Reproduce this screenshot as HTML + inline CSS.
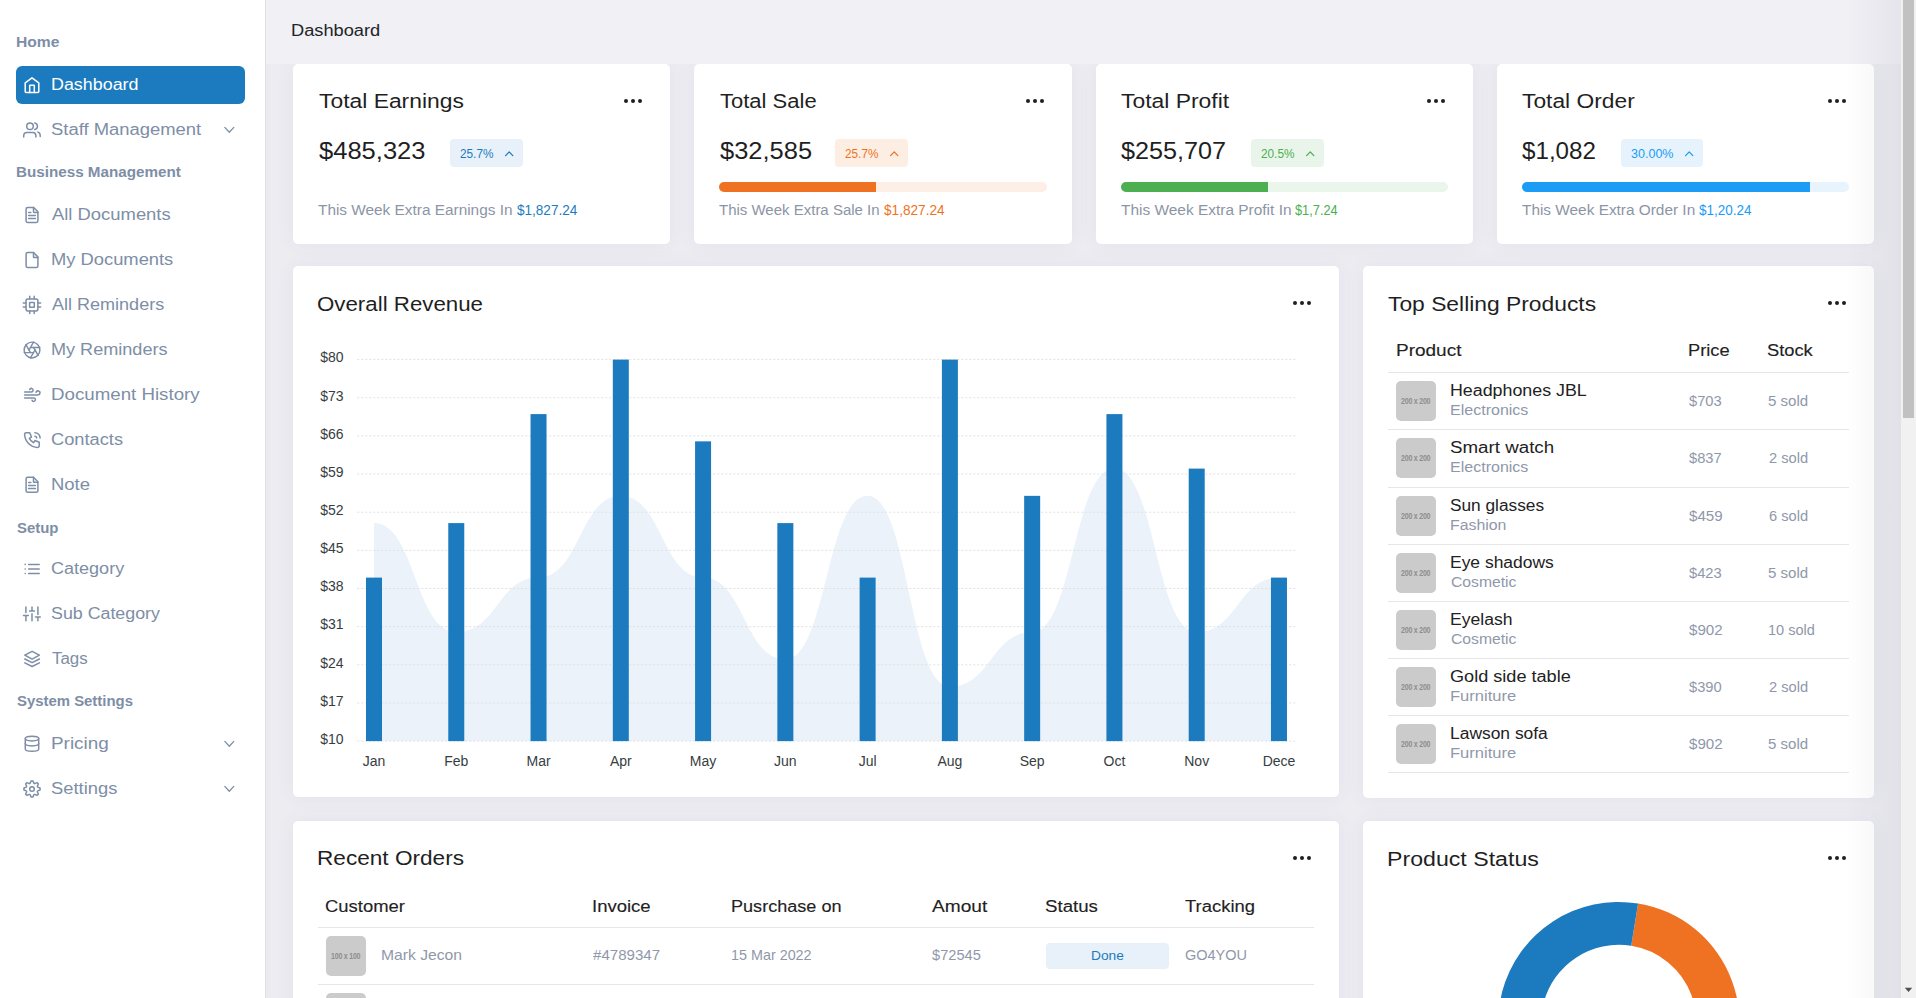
<!DOCTYPE html>
<html><head><meta charset="utf-8"><title>Dashboard</title><style>
*{margin:0;padding:0;box-sizing:border-box}
html,body{width:1916px;height:998px;overflow:hidden;background:#ececf1;font-family:"Liberation Sans",sans-serif}
.t{position:absolute;white-space:nowrap;line-height:1}
.ov{position:absolute;left:0;top:0;overflow:visible}
.sidebar{position:absolute;left:0;top:0;width:266px;height:998px;background:#fff;border-right:1px solid #e0e0e4;box-shadow:0 0 8px rgba(60,60,100,0.03)}
.active{position:absolute;left:16px;top:66px;width:229px;height:38px;background:#1c7bbf;border-radius:6px}
.card{position:absolute;background:#fff;border-radius:5px;box-shadow:0 0 20px rgba(90,90,130,0.06)}
.badge{position:absolute;top:139px;height:28px;border-radius:4px}
.track{position:absolute;top:182px;width:327.5px;height:9.5px;border-radius:5px;overflow:hidden}
.dot{position:absolute;width:4.2px;height:4.2px;border-radius:50%;background:#1f1f1f}
.hl{position:absolute;height:1px;background:#e6e6e6}
.ph{position:absolute;width:40px;height:40px;background:#cbcbcb;border-radius:5px;display:flex;align-items:center;justify-content:center}
.ph span{font-family:"Liberation Sans",sans-serif;font-weight:700;font-size:9px;color:#8e8e8e;letter-spacing:-0.3px;white-space:nowrap;transform:scaleX(0.78)}
.sb{position:absolute;left:1901px;top:0;width:15px;height:998px;background:#f1f1f1}
.thumb{position:absolute;left:1903px;top:0;width:11px;height:418px;background:#c1c1c1}
</style></head>
<body>
<div class="sidebar"></div>
<div class="active"></div>
<div class="card" style="left:293px;top:64px;width:377.25px;height:180px"></div><div class="card" style="left:694.25px;top:64px;width:377.25px;height:180px"></div><div class="card" style="left:1095.5px;top:64px;width:377.25px;height:180px"></div><div class="card" style="left:1496.75px;top:64px;width:377.25px;height:180px"></div><div class="card" style="left:293px;top:266px;width:1046px;height:531px"></div><div class="card" style="left:1363px;top:266px;width:511px;height:532px"></div><div class="card" style="left:293px;top:821px;width:1046px;height:400px"></div><div class="card" style="left:1363px;top:821px;width:511px;height:400px"></div>
<div style="position:absolute;left:266px;top:0;width:1635px;height:64px;background:#f0f0f5"></div>
<div class="badge" style="left:450px;width:73px;background:#e8f1f9"></div><svg class="ov" style="left:503.70px;top:149px" width="11" height="9" viewBox="0 0 11 9"><path d="M1.6 6.6 L5.2 2.9 L8.8 6.6" fill="none" stroke="#1c7bbf" stroke-width="1.3" stroke-linecap="round" stroke-linejoin="round"/></svg><div class="dot" style="left:624.25px;top:99.00px"></div><div class="dot" style="left:631.25px;top:99.00px"></div><div class="dot" style="left:638.25px;top:99.00px"></div><div class="badge" style="left:835px;width:73px;background:#fdeee4"></div><svg class="ov" style="left:888.70px;top:149px" width="11" height="9" viewBox="0 0 11 9"><path d="M1.6 6.6 L5.2 2.9 L8.8 6.6" fill="none" stroke="#ef7222" stroke-width="1.3" stroke-linecap="round" stroke-linejoin="round"/></svg><div class="track" style="left:719.35px;background:#fdefe6"><div style="width:47.8%;height:100%;background:#ee7222"></div></div><div class="dot" style="left:1025.50px;top:99.00px"></div><div class="dot" style="left:1032.50px;top:99.00px"></div><div class="dot" style="left:1039.50px;top:99.00px"></div><div class="badge" style="left:1251px;width:73px;background:#e9f5ea"></div><svg class="ov" style="left:1304.70px;top:149px" width="11" height="9" viewBox="0 0 11 9"><path d="M1.6 6.6 L5.2 2.9 L8.8 6.6" fill="none" stroke="#4caf50" stroke-width="1.3" stroke-linecap="round" stroke-linejoin="round"/></svg><div class="track" style="left:1120.60px;background:#eaf5eb"><div style="width:44.9%;height:100%;background:#4caf50"></div></div><div class="dot" style="left:1426.75px;top:99.00px"></div><div class="dot" style="left:1433.75px;top:99.00px"></div><div class="dot" style="left:1440.75px;top:99.00px"></div><div class="badge" style="left:1621px;width:82px;background:#e6f3fd"></div><svg class="ov" style="left:1683.70px;top:149px" width="11" height="9" viewBox="0 0 11 9"><path d="M1.6 6.6 L5.2 2.9 L8.8 6.6" fill="none" stroke="#1a9cf5" stroke-width="1.3" stroke-linecap="round" stroke-linejoin="round"/></svg><div class="track" style="left:1521.85px;background:#e7f4fe"><div style="width:88.0%;height:100%;background:#1b9df6"></div></div><div class="dot" style="left:1828.00px;top:99.00px"></div><div class="dot" style="left:1835.00px;top:99.00px"></div><div class="dot" style="left:1842.00px;top:99.00px"></div><div class="dot" style="left:1293.00px;top:300.80px"></div><div class="dot" style="left:1300.00px;top:300.80px"></div><div class="dot" style="left:1307.00px;top:300.80px"></div><div class="dot" style="left:1828.00px;top:300.80px"></div><div class="dot" style="left:1835.00px;top:300.80px"></div><div class="dot" style="left:1842.00px;top:300.80px"></div><div class="dot" style="left:1293.00px;top:855.80px"></div><div class="dot" style="left:1300.00px;top:855.80px"></div><div class="dot" style="left:1307.00px;top:855.80px"></div><div class="dot" style="left:1828.00px;top:855.60px"></div><div class="dot" style="left:1835.00px;top:855.60px"></div><div class="dot" style="left:1842.00px;top:855.60px"></div>
<div class="hl" style="left:1388px;top:372px;width:461px"></div><div class="hl" style="left:1388px;top:429px;width:461px"></div><div class="hl" style="left:1388px;top:487px;width:461px"></div><div class="hl" style="left:1388px;top:544px;width:461px"></div><div class="hl" style="left:1388px;top:601px;width:461px"></div><div class="hl" style="left:1388px;top:658px;width:461px"></div><div class="hl" style="left:1388px;top:715px;width:461px"></div><div class="hl" style="left:1388px;top:772px;width:461px"></div><div class="hl" style="left:318px;top:927px;width:996px"></div><div class="hl" style="left:318px;top:984.3px;width:996px"></div><div style="position:absolute;left:1046px;top:943px;width:123px;height:26px;background:#e8f1f9;border-radius:4px"></div>
<div class="ph" style="left:1396px;top:381.10px"><span>200 x 200</span></div><div class="ph" style="left:1396px;top:438.00px"><span>200 x 200</span></div><div class="ph" style="left:1396px;top:496.20px"><span>200 x 200</span></div><div class="ph" style="left:1396px;top:553.10px"><span>200 x 200</span></div><div class="ph" style="left:1396px;top:610.20px"><span>200 x 200</span></div><div class="ph" style="left:1396px;top:667.10px"><span>200 x 200</span></div><div class="ph" style="left:1396px;top:724.10px"><span>200 x 200</span></div><div class="ph" style="left:326px;top:936.4px"><span>100 x 100</span></div><div class="ph" style="left:326px;top:993px"><span>100 x 100</span></div>
<svg class="ov" width="1916" height="998" viewBox="0 0 1916 998"><path d="M374.00 523.10 C415.13 523.10 415.13 632.10 456.27 632.10 C497.40 632.10 497.40 577.60 538.54 577.60 C579.67 577.60 579.67 495.85 620.81 495.85 C661.94 495.85 661.94 577.60 703.08 577.60 C744.21 577.60 744.21 659.35 785.35 659.35 C826.48 659.35 826.48 495.85 867.62 495.85 C908.75 495.85 908.75 686.60 949.89 686.60 C991.02 686.60 991.02 632.10 1032.16 632.10 C1073.29 632.10 1073.29 468.60 1114.43 468.60 C1155.56 468.60 1155.56 632.10 1196.70 632.10 C1237.83 632.10 1237.83 577.60 1278.97 577.60 L1278.97 741.10 L374.00 741.10 Z" fill="#ebf2fa"/><line x1="357.3" y1="359.60" x2="1295.6" y2="359.60" stroke="#e0e0e0" stroke-width="1" stroke-dasharray="2 2"/><line x1="357.3" y1="397.75" x2="1295.6" y2="397.75" stroke="#e0e0e0" stroke-width="1" stroke-dasharray="2 2"/><line x1="357.3" y1="435.90" x2="1295.6" y2="435.90" stroke="#e0e0e0" stroke-width="1" stroke-dasharray="2 2"/><line x1="357.3" y1="474.05" x2="1295.6" y2="474.05" stroke="#e0e0e0" stroke-width="1" stroke-dasharray="2 2"/><line x1="357.3" y1="512.20" x2="1295.6" y2="512.20" stroke="#e0e0e0" stroke-width="1" stroke-dasharray="2 2"/><line x1="357.3" y1="550.35" x2="1295.6" y2="550.35" stroke="#e0e0e0" stroke-width="1" stroke-dasharray="2 2"/><line x1="357.3" y1="588.50" x2="1295.6" y2="588.50" stroke="#e0e0e0" stroke-width="1" stroke-dasharray="2 2"/><line x1="357.3" y1="626.65" x2="1295.6" y2="626.65" stroke="#e0e0e0" stroke-width="1" stroke-dasharray="2 2"/><line x1="357.3" y1="664.80" x2="1295.6" y2="664.80" stroke="#e0e0e0" stroke-width="1" stroke-dasharray="2 2"/><line x1="357.3" y1="702.95" x2="1295.6" y2="702.95" stroke="#e0e0e0" stroke-width="1" stroke-dasharray="2 2"/><line x1="357.3" y1="741.10" x2="1295.6" y2="741.10" stroke="#e0e0e0" stroke-width="1" stroke-dasharray="2 2"/><rect x="366.00" y="577.60" width="16" height="163.50" fill="#1c7bbf"/><rect x="448.27" y="523.10" width="16" height="218.00" fill="#1c7bbf"/><rect x="530.54" y="414.10" width="16" height="327.00" fill="#1c7bbf"/><rect x="612.81" y="359.60" width="16" height="381.50" fill="#1c7bbf"/><rect x="695.08" y="441.35" width="16" height="299.75" fill="#1c7bbf"/><rect x="777.35" y="523.10" width="16" height="218.00" fill="#1c7bbf"/><rect x="859.62" y="577.60" width="16" height="163.50" fill="#1c7bbf"/><rect x="941.89" y="359.60" width="16" height="381.50" fill="#1c7bbf"/><rect x="1024.16" y="495.85" width="16" height="245.25" fill="#1c7bbf"/><rect x="1106.43" y="414.10" width="16" height="327.00" fill="#1c7bbf"/><rect x="1188.70" y="468.60" width="16" height="272.50" fill="#1c7bbf"/><rect x="1270.97" y="577.60" width="16" height="163.50" fill="#1c7bbf"/><text x="343.5" y="362.40" text-anchor="end" font-family="Liberation Sans" font-size="14" fill="#373d3f">$80</text><text x="343.5" y="400.55" text-anchor="end" font-family="Liberation Sans" font-size="14" fill="#373d3f">$73</text><text x="343.5" y="438.70" text-anchor="end" font-family="Liberation Sans" font-size="14" fill="#373d3f">$66</text><text x="343.5" y="476.85" text-anchor="end" font-family="Liberation Sans" font-size="14" fill="#373d3f">$59</text><text x="343.5" y="515.00" text-anchor="end" font-family="Liberation Sans" font-size="14" fill="#373d3f">$52</text><text x="343.5" y="553.15" text-anchor="end" font-family="Liberation Sans" font-size="14" fill="#373d3f">$45</text><text x="343.5" y="591.30" text-anchor="end" font-family="Liberation Sans" font-size="14" fill="#373d3f">$38</text><text x="343.5" y="629.45" text-anchor="end" font-family="Liberation Sans" font-size="14" fill="#373d3f">$31</text><text x="343.5" y="667.60" text-anchor="end" font-family="Liberation Sans" font-size="14" fill="#373d3f">$24</text><text x="343.5" y="705.75" text-anchor="end" font-family="Liberation Sans" font-size="14" fill="#373d3f">$17</text><text x="343.5" y="743.90" text-anchor="end" font-family="Liberation Sans" font-size="14" fill="#373d3f">$10</text><text x="374.00" y="766.2" text-anchor="middle" font-family="Liberation Sans" font-size="14" fill="#373d3f">Jan</text><text x="456.27" y="766.2" text-anchor="middle" font-family="Liberation Sans" font-size="14" fill="#373d3f">Feb</text><text x="538.54" y="766.2" text-anchor="middle" font-family="Liberation Sans" font-size="14" fill="#373d3f">Mar</text><text x="620.81" y="766.2" text-anchor="middle" font-family="Liberation Sans" font-size="14" fill="#373d3f">Apr</text><text x="703.08" y="766.2" text-anchor="middle" font-family="Liberation Sans" font-size="14" fill="#373d3f">May</text><text x="785.35" y="766.2" text-anchor="middle" font-family="Liberation Sans" font-size="14" fill="#373d3f">Jun</text><text x="867.62" y="766.2" text-anchor="middle" font-family="Liberation Sans" font-size="14" fill="#373d3f">Jul</text><text x="949.89" y="766.2" text-anchor="middle" font-family="Liberation Sans" font-size="14" fill="#373d3f">Aug</text><text x="1032.16" y="766.2" text-anchor="middle" font-family="Liberation Sans" font-size="14" fill="#373d3f">Sep</text><text x="1114.43" y="766.2" text-anchor="middle" font-family="Liberation Sans" font-size="14" fill="#373d3f">Oct</text><text x="1196.70" y="766.2" text-anchor="middle" font-family="Liberation Sans" font-size="14" fill="#373d3f">Nov</text><text x="1278.97" y="766.2" text-anchor="middle" font-family="Liberation Sans" font-size="14" fill="#373d3f">Dece</text><path d="M1638.08 903.45 A120.6 120.6 0 0 1 1711.18 1100.02 L1678.32 1072.44 A77.7 77.7 0 0 0 1631.22 945.80 Z" fill="#ef7222"/><path d="M1711.18 1100.02 A120.6 120.6 0 0 1 1577.55 1135.83 L1592.23 1095.51 A77.7 77.7 0 0 0 1678.32 1072.44 Z" fill="#4caf50"/><path d="M1577.55 1135.83 A120.6 120.6 0 0 1 1638.08 903.45 L1631.22 945.80 A77.7 77.7 0 0 0 1592.23 1095.51 Z" fill="#1c7bbf"/></svg>
<svg class="ov" width="266" height="998" viewBox="0 0 266 998" fill="none" stroke-linecap="round" stroke-linejoin="round"><path d="M25.2 82.9 L32 77.8 L38.8 82.9 V91.6 a0.9 0.9 0 0 1 -0.9 0.9 H26.1 a0.9 0.9 0 0 1 -0.9 -0.9 Z" stroke="#ffffff" stroke-width="1.5"/><path d="M29.7 92.4 V85.6 a0.3 0.3 0 0 1 0.3 -0.3 h4 a0.3 0.3 0 0 1 0.3 0.3 V92.4" stroke="#ffffff" stroke-width="1.5"/><g stroke="#7d8ea6" stroke-width="1.5"><circle cx="30" cy="126.2" r="3.3"/><path d="M23.7 136.9 v-1.3 a3.2 3.2 0 0 1 3.2 -3.2 h5.8 a3.2 3.2 0 0 1 3.2 3.2 v1.3"/><path d="M34.7 122.9 a3.3 3.3 0 0 1 0 6.5"/><path d="M40.2 136.6 v-1.2 a3.4 3.4 0 0 0 -2.3 -3.3"/></g><path d="M224.8 127.4 L229.3 132.2 L233.8 127.4" stroke="#7d8ea6" stroke-width="1.3"/><path d="M224.8 741.4 L229.3 746.2 L233.8 741.4" stroke="#7d8ea6" stroke-width="1.3"/><path d="M224.8 786.4 L229.3 791.2 L233.8 786.4" stroke="#7d8ea6" stroke-width="1.3"/><g stroke="#7d8ea6" stroke-width="1.5"><path d="M33.5 207.4 v4.4 a0.6 0.6 0 0 0 0.6 0.6 h3.8"/><path d="M36.3 222.4 h-8.6 a1.6 1.6 0 0 1 -1.6 -1.6 v-11.8 a1.6 1.6 0 0 1 1.6 -1.6 h5.8 l4.4 4.4 v9 a1.6 1.6 0 0 1 -1.6 1.6 z"/><path d="M28.6 212.6 h2.2 M28.6 215.6 h6.8 M28.6 218.6 h6.8"/></g><g stroke="#7d8ea6" stroke-width="1.5"><path d="M33.5 252.5 v4.4 a0.6 0.6 0 0 0 0.6 0.6 h3.8"/><path d="M36.3 267.5 h-8.6 a1.6 1.6 0 0 1 -1.6 -1.6 v-11.8 a1.6 1.6 0 0 1 1.6 -1.6 h5.8 l4.4 4.4 v9 a1.6 1.6 0 0 1 -1.6 1.6 z"/></g><g stroke="#7d8ea6" stroke-width="1.5"><path d="M33.5 477.3 v4.4 a0.6 0.6 0 0 0 0.6 0.6 h3.8"/><path d="M36.3 492.3 h-8.6 a1.6 1.6 0 0 1 -1.6 -1.6 v-11.8 a1.6 1.6 0 0 1 1.6 -1.6 h5.8 l4.4 4.4 v9 a1.6 1.6 0 0 1 -1.6 1.6 z"/><path d="M28.6 482.5 h2.2 M28.6 485.5 h6.8 M28.6 488.5 h6.8"/></g><g stroke="#7d8ea6" stroke-width="1.5"><rect x="26" y="299" width="11.9" height="11.9" rx="1.8"/><rect x="29.6" y="302.6" width="4.7" height="4.7" rx="0.3"/><path d="M23.3 302.9h2.7 M23.3 306.9h2.7 M37.9 302.9h2.7 M37.9 306.9h2.7 M29.7 296.3v2.7 M34.2 296.3v2.7 M29.7 310.9v2.7 M34.2 310.9v2.7"/></g><g stroke="#7d8ea6" stroke-width="1.45"><circle cx="32.0" cy="350.0" r="7.9"/><path d="M24.22 352.60 L33.50 352.60"/><path d="M25.86 344.57 L30.50 352.60"/><path d="M33.64 341.97 L29.00 350.00"/><path d="M39.78 347.40 L30.50 347.40"/><path d="M38.14 355.43 L33.50 347.40"/><path d="M30.36 358.03 L35.00 350.00"/></g><g stroke="#7d8ea6" stroke-width="1.5"><path d="M24.6 391.9 H31.3 a1.75 1.75 0 1 0 -1.65 -2.3"/><path d="M24.6 395 H37.9 a2.05 2.05 0 1 0 -1.9 -2.7"/><path d="M24.6 397.9 H33.7 a1.75 1.75 0 1 1 -1.65 2.3"/></g><g transform="translate(33.2 441.3) scale(1.08) translate(-32.4 -439.9)" stroke="#7d8ea6" stroke-width="1.4"><path d="M26 432 h3.2 l1.6 4 l-2 1.2 a8.8 8.8 0 0 0 4 4 l1.2 -2 l4 1.6 v3.2 a1.6 1.6 0 0 1 -1.6 1.6 a12.8 12.8 0 0 1 -12 -12 a1.6 1.6 0 0 1 1.6 -1.6"/><path d="M34 435.2 a1.6 1.6 0 0 1 1.6 1.6"/><path d="M34 432 a4.8 4.8 0 0 1 4.8 4.8"/></g><g stroke="#7d8ea6" stroke-width="1.5"><path d="M28.6 564.4 h10.6 M28.6 569 h10.6 M28.6 573.5 h10.6"/><path d="M25.2 564.4 v0.01 M25.2 569 v0.01 M25.2 573.5 v0.01" stroke-width="1.6"/></g><g stroke="#7d8ea6" stroke-width="1.5"><path d="M25.9 607 v5.4 M23.5 615.5 h4.8 M25.9 615.5 v5.2"/><path d="M32 607 v3.9 M29.6 610.9 h4.8 M32 613.8 v6.9"/><path d="M37.9 607 v7.4 M35.5 616.9 h4.8 M37.9 616.9 v3.8"/></g><g stroke="#7d8ea6" stroke-width="1.5"><path d="M32.1 651.3 l-7.3 3.9 l7.3 3.9 l7.3 -3.9 z"/><path d="M24.8 659 l7.3 3.7 l7.3 -3.7"/><path d="M24.8 662.8 l7.3 3.7 l7.3 -3.7"/></g><g stroke="#7d8ea6" stroke-width="1.5"><ellipse cx="32" cy="738.6" rx="6.7" ry="2.3"/><path d="M25.3 738.6 v5 a6.7 2.3 0 0 0 13.4 0 v-5"/><path d="M25.3 743.6 v5.3 a6.7 2.3 0 0 0 13.4 0 v-5.3"/></g><g stroke="#7d8ea6" stroke-width="1.5"><path d="M30.15 783.29 L31.01 780.96 A8.1 8.1 0 0 1 32.99 780.96 L33.85 783.29 A6.0 6.0 0 0 1 34.72 783.65 L36.99 782.62 A8.1 8.1 0 0 1 38.38 784.01 L37.35 786.28 A6.0 6.0 0 0 1 37.71 787.15 L40.04 788.01 A8.1 8.1 0 0 1 40.04 789.99 L37.71 790.85 A6.0 6.0 0 0 1 37.35 791.72 L38.38 793.99 A8.1 8.1 0 0 1 36.99 795.38 L34.72 794.35 A6.0 6.0 0 0 1 33.85 794.71 L32.99 797.04 A8.1 8.1 0 0 1 31.01 797.04 L30.15 794.71 A6.0 6.0 0 0 1 29.28 794.35 L27.01 795.38 A8.1 8.1 0 0 1 25.62 793.99 L26.65 791.72 A6.0 6.0 0 0 1 26.29 790.85 L23.96 789.99 A8.1 8.1 0 0 1 23.96 788.01 L26.29 787.15 A6.0 6.0 0 0 1 26.65 786.28 L25.62 784.01 A8.1 8.1 0 0 1 27.01 782.62 L29.28 783.65 A6.0 6.0 0 0 1 30.15 783.29 Z"/><circle cx="32.0" cy="789.0" r="2.3"/></g></svg>
<div class="t" style="left:15.88px;top:35.35px;font-size:14px;font-weight:700;color:#7d8ea6;letter-spacing:0.000px;transform:scaleX(1.1184);transform-origin:0 0;">Home</div>
<div class="t" style="left:15.91px;top:165.45px;font-size:14px;font-weight:700;color:#7d8ea6;letter-spacing:0.000px;transform:scaleX(1.0861);transform-origin:0 0;">Business Management</div>
<div class="t" style="left:16.50px;top:520.75px;font-size:14px;font-weight:700;color:#7d8ea6;letter-spacing:0.000px;transform:scaleX(1.0667);transform-origin:0 0;">Setup</div>
<div class="t" style="left:16.50px;top:694.45px;font-size:14px;font-weight:700;color:#7d8ea6;letter-spacing:0.000px;transform:scaleX(1.0642);transform-origin:0 0;">System Settings</div>
<div class="t" style="left:50.68px;top:76.66px;font-size:16px;font-weight:400;color:#ffffff;letter-spacing:0.000px;transform:scaleX(1.1182);transform-origin:0 0;">Dashboard</div>
<div class="t" style="left:50.65px;top:121.76px;font-size:16px;font-weight:400;color:#7d8ea6;letter-spacing:0.000px;transform:scaleX(1.1515);transform-origin:0 0;">Staff Management</div>
<div class="t" style="left:51.80px;top:206.66px;font-size:16px;font-weight:400;color:#7d8ea6;letter-spacing:0.000px;transform:scaleX(1.1505);transform-origin:0 0;">All Documents</div>
<div class="t" style="left:50.65px;top:251.76px;font-size:16px;font-weight:400;color:#7d8ea6;letter-spacing:0.000px;transform:scaleX(1.1462);transform-origin:0 0;">My Documents</div>
<div class="t" style="left:51.80px;top:296.76px;font-size:16px;font-weight:400;color:#7d8ea6;letter-spacing:0.000px;transform:scaleX(1.1263);transform-origin:0 0;">All Reminders</div>
<div class="t" style="left:50.67px;top:341.76px;font-size:16px;font-weight:400;color:#7d8ea6;letter-spacing:0.000px;transform:scaleX(1.1294);transform-origin:0 0;">My Reminders</div>
<div class="t" style="left:50.63px;top:386.76px;font-size:16px;font-weight:400;color:#7d8ea6;letter-spacing:0.000px;transform:scaleX(1.1690);transform-origin:0 0;">Document History</div>
<div class="t" style="left:50.66px;top:431.76px;font-size:16px;font-weight:400;color:#7d8ea6;letter-spacing:0.000px;transform:scaleX(1.1403);transform-origin:0 0;">Contacts</div>
<div class="t" style="left:50.65px;top:476.76px;font-size:16px;font-weight:400;color:#7d8ea6;letter-spacing:0.000px;transform:scaleX(1.1545);transform-origin:0 0;">Note</div>
<div class="t" style="left:50.67px;top:560.86px;font-size:16px;font-weight:400;color:#7d8ea6;letter-spacing:0.000px;transform:scaleX(1.1266);transform-origin:0 0;">Category</div>
<div class="t" style="left:50.69px;top:605.86px;font-size:16px;font-weight:400;color:#7d8ea6;letter-spacing:0.000px;transform:scaleX(1.1134);transform-origin:0 0;">Sub Category</div>
<div class="t" style="left:51.80px;top:650.86px;font-size:16px;font-weight:400;color:#7d8ea6;letter-spacing:0.000px;transform:scaleX(1.0559);transform-origin:0 0;">Tags</div>
<div class="t" style="left:50.62px;top:735.86px;font-size:16px;font-weight:400;color:#7d8ea6;letter-spacing:-0.000px;transform:scaleX(1.1809);transform-origin:0 0;">Pricing</div>
<div class="t" style="left:50.65px;top:780.86px;font-size:16px;font-weight:400;color:#7d8ea6;letter-spacing:0.000px;transform:scaleX(1.1474);transform-origin:0 0;">Settings</div>
<div class="t" style="left:290.86px;top:22.66px;font-size:16px;font-weight:400;color:#212529;letter-spacing:0.000px;transform:scaleX(1.1390);transform-origin:0 0;">Dashboard</div>
<div class="t" style="left:318.50px;top:91.17px;font-size:20px;font-weight:400;color:#1f1f1f;letter-spacing:0.000px;transform:scaleX(1.1429);transform-origin:0 0;">Total Earnings</div>
<div class="t" style="left:318.70px;top:139.18px;font-size:24px;font-weight:400;color:#1f1f1f;letter-spacing:-0.000px;transform:scaleX(1.0636);transform-origin:0 0;">$485,323</div>
<div class="t" style="left:460.00px;top:147.84px;font-size:12px;font-weight:400;color:#1c7bbf;letter-spacing:0.000px;transform:scaleX(0.9824);transform-origin:0 0;">25.7%</div>
<div class="t" style="left:318.20px;top:203.25px;font-size:14px;font-weight:400;color:#8c95a6;letter-spacing:0.000px;transform:scaleX(1.0977);transform-origin:0 0;">This Week Extra Earnings In</div>
<div class="t" style="left:516.70px;top:203.25px;font-size:14px;font-weight:400;color:#1c7bbf;letter-spacing:0.000px;transform:scaleX(0.9677);transform-origin:0 0;">$1,827.24</div>
<div class="t" style="left:719.75px;top:91.17px;font-size:20px;font-weight:400;color:#1f1f1f;letter-spacing:0.000px;transform:scaleX(1.1000);transform-origin:0 0;">Total Sale</div>
<div class="t" style="left:719.95px;top:139.18px;font-size:24px;font-weight:400;color:#1f1f1f;letter-spacing:-0.000px;transform:scaleX(1.0616);transform-origin:0 0;">$32,585</div>
<div class="t" style="left:845.00px;top:147.84px;font-size:12px;font-weight:400;color:#ef7222;letter-spacing:0.000px;transform:scaleX(0.9824);transform-origin:0 0;">25.7%</div>
<div class="t" style="left:719.45px;top:203.25px;font-size:14px;font-weight:400;color:#8c95a6;letter-spacing:0.000px;transform:scaleX(1.0710);transform-origin:0 0;">This Week Extra Sale In</div>
<div class="t" style="left:884.30px;top:203.25px;font-size:14px;font-weight:400;color:#ef7222;letter-spacing:0.000px;transform:scaleX(0.9726);transform-origin:0 0;">$1,827.24</div>
<div class="t" style="left:1121.00px;top:91.17px;font-size:20px;font-weight:400;color:#1f1f1f;letter-spacing:0.000px;transform:scaleX(1.1442);transform-origin:0 0;">Total Profit</div>
<div class="t" style="left:1121.20px;top:139.18px;font-size:24px;font-weight:400;color:#1f1f1f;letter-spacing:0.000px;transform:scaleX(1.0485);transform-origin:0 0;">$255,707</div>
<div class="t" style="left:1261.00px;top:147.84px;font-size:12px;font-weight:400;color:#4caf50;letter-spacing:0.000px;transform:scaleX(0.9824);transform-origin:0 0;">20.5%</div>
<div class="t" style="left:1120.70px;top:203.25px;font-size:14px;font-weight:400;color:#8c95a6;letter-spacing:0.000px;transform:scaleX(1.1032);transform-origin:0 0;">This Week Extra Profit In</div>
<div class="t" style="left:1294.80px;top:203.25px;font-size:14px;font-weight:400;color:#4caf50;letter-spacing:0.000px;transform:scaleX(0.9149);transform-origin:0 0;">$1,7.24</div>
<div class="t" style="left:1522.25px;top:91.17px;font-size:20px;font-weight:400;color:#1f1f1f;letter-spacing:0.000px;transform:scaleX(1.1394);transform-origin:0 0;">Total Order</div>
<div class="t" style="left:1522.45px;top:139.18px;font-size:24px;font-weight:400;color:#1f1f1f;letter-spacing:0.000px;transform:scaleX(1.0068);transform-origin:0 0;">$1,082</div>
<div class="t" style="left:1631.00px;top:147.84px;font-size:12px;font-weight:400;color:#1a9cf5;letter-spacing:-0.000px;transform:scaleX(1.0439);transform-origin:0 0;">30.00%</div>
<div class="t" style="left:1521.95px;top:203.25px;font-size:14px;font-weight:400;color:#8c95a6;letter-spacing:0.000px;transform:scaleX(1.0984);transform-origin:0 0;">This Week Extra Order In</div>
<div class="t" style="left:1698.60px;top:203.25px;font-size:14px;font-weight:400;color:#1a9cf5;letter-spacing:0.000px;transform:scaleX(0.9618);transform-origin:0 0;">$1,20.24</div>
<div class="t" style="left:317.19px;top:293.57px;font-size:20px;font-weight:400;color:#1f1f1f;letter-spacing:0.000px;transform:scaleX(1.1143);transform-origin:0 0;">Overall Revenue</div>
<div class="t" style="left:1388.30px;top:293.67px;font-size:20px;font-weight:400;color:#1f1f1f;letter-spacing:0.000px;transform:scaleX(1.1412);transform-origin:0 0;">Top Selling Products</div>
<div class="t" style="left:317.37px;top:848.37px;font-size:20px;font-weight:400;color:#1f1f1f;letter-spacing:0.000px;transform:scaleX(1.1302);transform-origin:0 0;">Recent Orders</div>
<div class="t" style="left:1387.34px;top:848.67px;font-size:20px;font-weight:400;color:#1f1f1f;letter-spacing:0.000px;transform:scaleX(1.1577);transform-origin:0 0;">Product Status</div>
<div class="t" style="left:1395.51px;top:343.36px;font-size:16px;font-weight:400;color:#222222;letter-spacing:0.000px;transform:scaleX(1.1870);transform-origin:0 0;-webkit-text-stroke:0.12px #222222;">Product</div>
<div class="t" style="left:1687.66px;top:343.36px;font-size:16px;font-weight:400;color:#222222;letter-spacing:0.000px;transform:scaleX(1.1429);transform-origin:0 0;-webkit-text-stroke:0.12px #222222;">Price</div>
<div class="t" style="left:1767.46px;top:343.36px;font-size:16px;font-weight:400;color:#222222;letter-spacing:0.000px;transform:scaleX(1.1436);transform-origin:0 0;-webkit-text-stroke:0.12px #222222;">Stock</div>
<div class="t" style="left:1450.19px;top:382.96px;font-size:16px;font-weight:400;color:#222222;letter-spacing:0.000px;transform:scaleX(1.1139);transform-origin:0 0;">Headphones JBL</div>
<div class="t" style="left:1450.16px;top:403.25px;font-size:14px;font-weight:400;color:#8f98aa;letter-spacing:0.000px;transform:scaleX(1.1448);transform-origin:0 0;">Electronics</div>
<div class="t" style="left:1688.80px;top:393.10px;font-size:15px;font-weight:400;color:#8f98aa;letter-spacing:0.000px;transform:scaleX(0.9788);transform-origin:0 0;">$703</div>
<div class="t" style="left:1767.80px;top:393.10px;font-size:15px;font-weight:400;color:#8f98aa;letter-spacing:0.000px;transform:scaleX(1.0026);transform-origin:0 0;">5 sold</div>
<div class="t" style="left:1450.13px;top:439.86px;font-size:16px;font-weight:400;color:#222222;letter-spacing:-0.000px;transform:scaleX(1.1713);transform-origin:0 0;">Smart watch</div>
<div class="t" style="left:1450.16px;top:460.15px;font-size:14px;font-weight:400;color:#8f98aa;letter-spacing:0.000px;transform:scaleX(1.1448);transform-origin:0 0;">Electronics</div>
<div class="t" style="left:1688.80px;top:450.00px;font-size:15px;font-weight:400;color:#8f98aa;letter-spacing:0.000px;transform:scaleX(0.9788);transform-origin:0 0;">$837</div>
<div class="t" style="left:1768.80px;top:450.00px;font-size:15px;font-weight:400;color:#8f98aa;letter-spacing:0.000px;transform:scaleX(0.9775);transform-origin:0 0;">2 sold</div>
<div class="t" style="left:1450.22px;top:498.06px;font-size:16px;font-weight:400;color:#222222;letter-spacing:0.000px;transform:scaleX(1.0791);transform-origin:0 0;">Sun glasses</div>
<div class="t" style="left:1450.17px;top:518.35px;font-size:14px;font-weight:400;color:#8f98aa;letter-spacing:0.000px;transform:scaleX(1.1333);transform-origin:0 0;">Fashion</div>
<div class="t" style="left:1688.80px;top:508.20px;font-size:15px;font-weight:400;color:#8f98aa;letter-spacing:0.000px;transform:scaleX(1.0091);transform-origin:0 0;">$459</div>
<div class="t" style="left:1768.80px;top:508.20px;font-size:15px;font-weight:400;color:#8f98aa;letter-spacing:0.000px;transform:scaleX(0.9775);transform-origin:0 0;">6 sold</div>
<div class="t" style="left:1450.21px;top:554.96px;font-size:16px;font-weight:400;color:#222222;letter-spacing:0.000px;transform:scaleX(1.0904);transform-origin:0 0;">Eye shadows</div>
<div class="t" style="left:1451.30px;top:575.25px;font-size:14px;font-weight:400;color:#8f98aa;letter-spacing:0.000px;transform:scaleX(1.1207);transform-origin:0 0;">Cosmetic</div>
<div class="t" style="left:1688.80px;top:565.10px;font-size:15px;font-weight:400;color:#8f98aa;letter-spacing:0.000px;transform:scaleX(0.9788);transform-origin:0 0;">$423</div>
<div class="t" style="left:1767.80px;top:565.10px;font-size:15px;font-weight:400;color:#8f98aa;letter-spacing:0.000px;transform:scaleX(1.0026);transform-origin:0 0;">5 sold</div>
<div class="t" style="left:1450.20px;top:612.06px;font-size:16px;font-weight:400;color:#222222;letter-spacing:0.000px;transform:scaleX(1.0964);transform-origin:0 0;">Eyelash</div>
<div class="t" style="left:1451.30px;top:632.35px;font-size:14px;font-weight:400;color:#8f98aa;letter-spacing:0.000px;transform:scaleX(1.1207);transform-origin:0 0;">Cosmetic</div>
<div class="t" style="left:1688.80px;top:622.20px;font-size:15px;font-weight:400;color:#8f98aa;letter-spacing:0.000px;transform:scaleX(1.0091);transform-origin:0 0;">$902</div>
<div class="t" style="left:1767.83px;top:622.20px;font-size:15px;font-weight:400;color:#8f98aa;letter-spacing:0.000px;transform:scaleX(0.9702);transform-origin:0 0;">10 sold</div>
<div class="t" style="left:1450.17px;top:668.96px;font-size:16px;font-weight:400;color:#222222;letter-spacing:0.000px;transform:scaleX(1.1314);transform-origin:0 0;">Gold side table</div>
<div class="t" style="left:1450.12px;top:689.25px;font-size:14px;font-weight:400;color:#8f98aa;letter-spacing:0.000px;transform:scaleX(1.1818);transform-origin:0 0;">Furniture</div>
<div class="t" style="left:1688.80px;top:679.10px;font-size:15px;font-weight:400;color:#8f98aa;letter-spacing:0.000px;transform:scaleX(0.9788);transform-origin:0 0;">$390</div>
<div class="t" style="left:1768.80px;top:679.10px;font-size:15px;font-weight:400;color:#8f98aa;letter-spacing:0.000px;transform:scaleX(0.9775);transform-origin:0 0;">2 sold</div>
<div class="t" style="left:1450.21px;top:725.96px;font-size:16px;font-weight:400;color:#222222;letter-spacing:0.000px;transform:scaleX(1.0888);transform-origin:0 0;">Lawson sofa</div>
<div class="t" style="left:1450.12px;top:746.25px;font-size:14px;font-weight:400;color:#8f98aa;letter-spacing:0.000px;transform:scaleX(1.1818);transform-origin:0 0;">Furniture</div>
<div class="t" style="left:1688.80px;top:736.10px;font-size:15px;font-weight:400;color:#8f98aa;letter-spacing:0.000px;transform:scaleX(1.0091);transform-origin:0 0;">$902</div>
<div class="t" style="left:1767.80px;top:736.10px;font-size:15px;font-weight:400;color:#8f98aa;letter-spacing:0.000px;transform:scaleX(1.0026);transform-origin:0 0;">5 sold</div>
<div class="t" style="left:325.35px;top:898.86px;font-size:16px;font-weight:400;color:#222222;letter-spacing:0.000px;transform:scaleX(1.1515);transform-origin:0 0;-webkit-text-stroke:0.12px #222222;">Customer</div>
<div class="t" style="left:592.34px;top:898.86px;font-size:16px;font-weight:400;color:#222222;letter-spacing:0.000px;transform:scaleX(1.1571);transform-origin:0 0;-webkit-text-stroke:0.12px #222222;">Invoice</div>
<div class="t" style="left:730.87px;top:898.86px;font-size:16px;font-weight:400;color:#222222;letter-spacing:0.000px;transform:scaleX(1.1292);transform-origin:0 0;-webkit-text-stroke:0.12px #222222;">Pusrchase on</div>
<div class="t" style="left:931.80px;top:898.86px;font-size:16px;font-weight:400;color:#222222;letter-spacing:0.000px;transform:scaleX(1.1935);transform-origin:0 0;-webkit-text-stroke:0.12px #222222;">Amout</div>
<div class="t" style="left:1045.03px;top:898.86px;font-size:16px;font-weight:400;color:#222222;letter-spacing:0.000px;transform:scaleX(1.1659);transform-origin:0 0;-webkit-text-stroke:0.12px #222222;">Status</div>
<div class="t" style="left:1185.40px;top:898.86px;font-size:16px;font-weight:400;color:#222222;letter-spacing:0.000px;transform:scaleX(1.1517);transform-origin:0 0;-webkit-text-stroke:0.12px #222222;">Tracking</div>
<div class="t" style="left:380.66px;top:947.00px;font-size:15px;font-weight:400;color:#8f98aa;letter-spacing:0.000px;transform:scaleX(1.0447);transform-origin:0 0;">Mark Jecon</div>
<div class="t" style="left:593.10px;top:947.00px;font-size:15px;font-weight:400;color:#8f98aa;letter-spacing:0.000px;transform:scaleX(1.0045);transform-origin:0 0;">#4789347</div>
<div class="t" style="left:731.04px;top:947.00px;font-size:15px;font-weight:400;color:#8f98aa;letter-spacing:0.000px;transform:scaleX(0.9566);transform-origin:0 0;">15 Mar 2022</div>
<div class="t" style="left:931.80px;top:947.00px;font-size:15px;font-weight:400;color:#8f98aa;letter-spacing:0.000px;transform:scaleX(0.9740);transform-origin:0 0;">$72545</div>
<div class="t" style="left:1185.40px;top:947.00px;font-size:15px;font-weight:400;color:#8f98aa;letter-spacing:0.000px;transform:scaleX(0.9667);transform-origin:0 0;">GO4YOU</div>
<div class="t" style="left:1090.94px;top:949.00px;font-size:13px;font-weight:400;color:#1c7bbf;letter-spacing:0.000px;transform:scaleX(1.0600);transform-origin:0 0;">Done</div>
<div style="position:absolute;left:1846px;top:0;width:55px;height:998px;background:linear-gradient(to right,rgba(30,30,60,0),rgba(30,30,60,0.055))"></div>
<div style="position:absolute;left:1901px;top:0;width:15px;height:998px;background:#f1f1f1"></div>
<div class="thumb"></div>
<svg class="ov" style="left:1901px;top:982px" width="15" height="16" viewBox="0 0 15 16"><path d="M3.8 5.8 L11.2 5.8 L7.5 10 Z" fill="#505050"/></svg>
</body></html>
